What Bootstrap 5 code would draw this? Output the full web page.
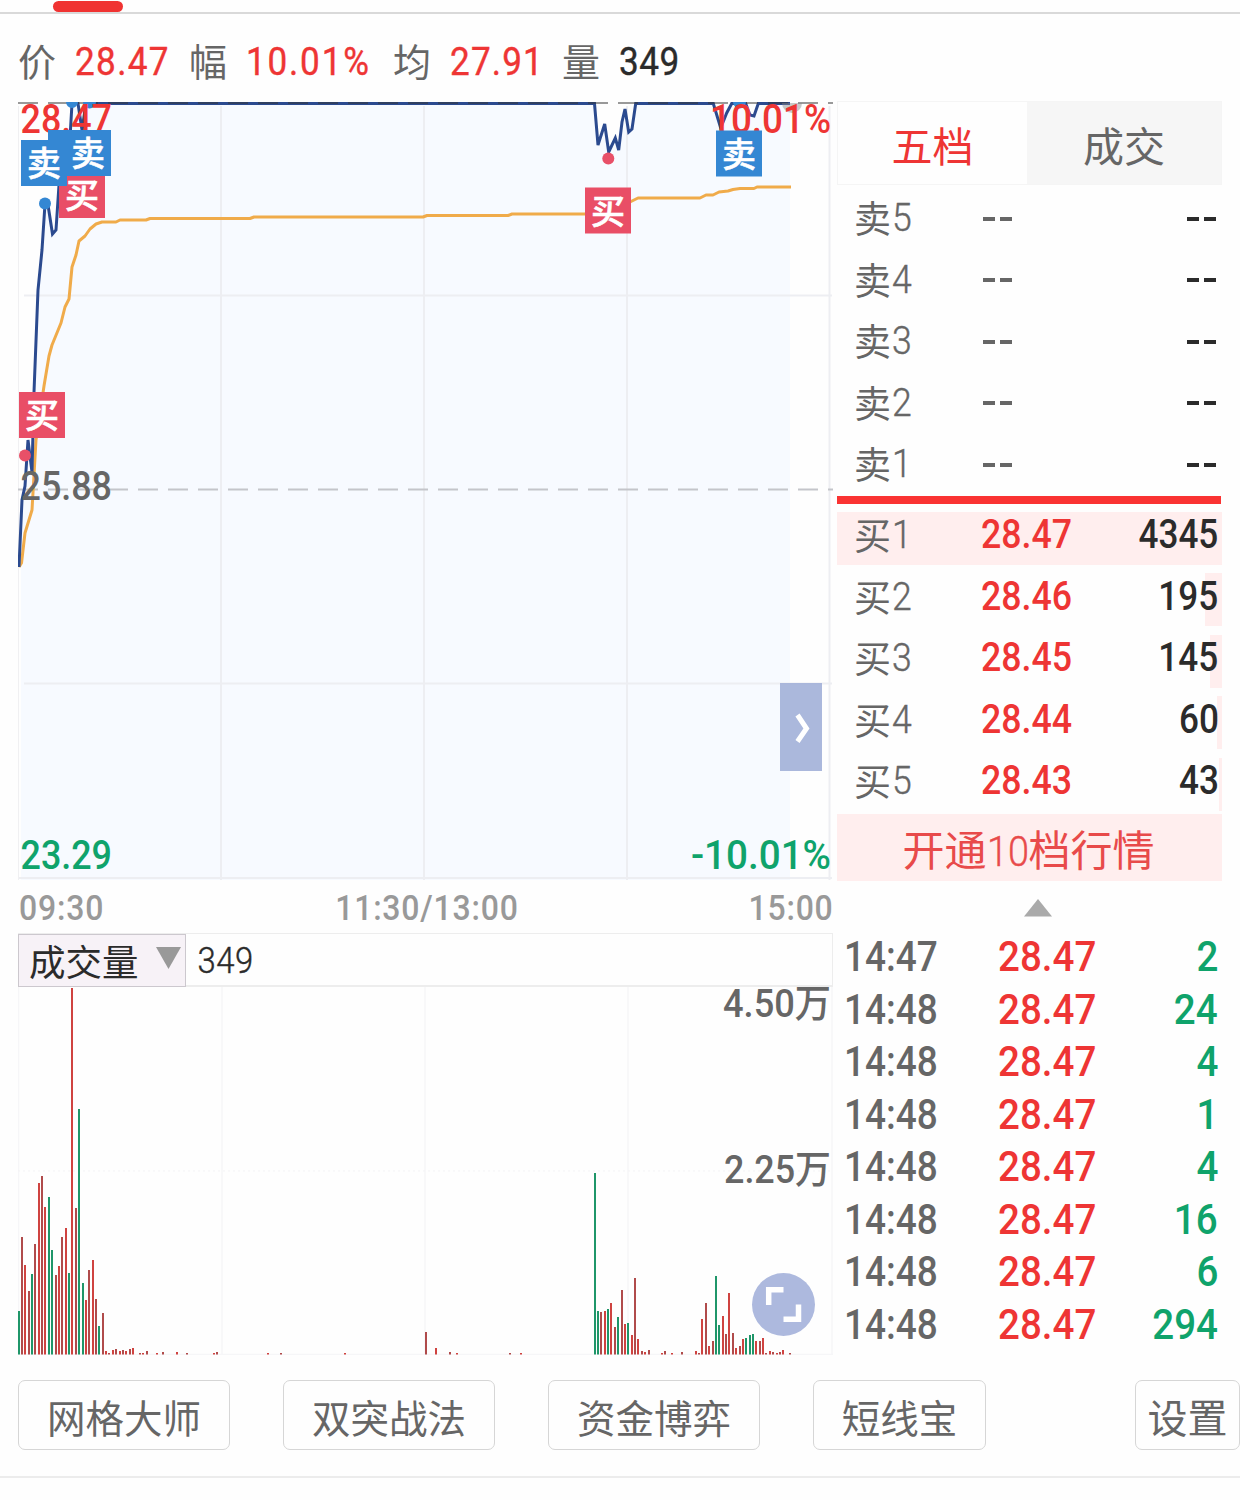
<!DOCTYPE html>
<html lang="zh-CN">
<head>
<meta charset="utf-8">
<meta name="viewport" content="width=device-width, initial-scale=1">
<title>分时行情</title>
<link rel="stylesheet" href="https://cdn.jsdelivr.net/npm/bootstrap@5.3.0/dist/css/bootstrap.min.css">
<style>
:root{--up:#ee3534;--down:#0fa36b;--ink:#666;--dark:#2b2b2b}
body{width:1240px;height:1500px;overflow:hidden;background:#fefefe;color:var(--ink);font-family:Roboto,"Noto Sans CJK SC",sans-serif;line-height:1}
.up{color:var(--up)}.down{color:var(--down)}.ink-dark{color:var(--dark)}
.topline{height:14px;border-bottom:2px solid #d9d9d9}
.topline i{left:53px;top:1px;width:70px;height:11px;background:#f03332}
.quote{height:87px;padding:10px 0 0 18px;font-size:38px}
.quote .cap{width:57px}
.quote .val{font-size:39px;padding-bottom:1px;-webkit-text-stroke:.4px}
.num{display:inline-block;transform:scaleX(.9);transform-origin:0 50%;white-space:nowrap}
.num-end{transform-origin:100% 50%}
.left-col{width:815px;margin-left:18px}
.right-col{width:385px;margin-left:4px}
.price-box{height:779px}
svg{display:block}
svg text{font-family:Roboto,"Noto Sans CJK SC",sans-serif;font-weight:500}
.axis{height:53px;font-size:35.5px;font-weight:500;color:#999;padding:5px 0 0 1px}
.axis .num{letter-spacing:.9px}
.axis .num-end{margin-right:-1px}
.vol-head{height:54px;border:1px solid #ededed;border-left:0;border-bottom-width:2px;font-size:36.5px;color:var(--dark)}
.vol-pick{width:168px;height:53px;background:#f7f2f7;border:1px solid #ccc8ce;padding:8px 0 0 10px}
.vol-pick svg{margin:-12px 0 0 16px}
.side-toggle{left:762px;top:582px;width:42px;height:88px;background:rgba(158,173,215,.87)}
.expand{left:734px;top:286px;width:63px;height:63px;background:#adb9de}
.tab-row{height:84px;font-size:41px;border:1px solid #f5f5f5}
.tab-row>div{padding-top:10px}
.tab-row .off{background:#f6f6f6;width:194px}
.book{height:61.5px;font-size:37px;padding-left:17px}
.book .lbl{width:127px;padding-top:2px}
.book .lbl b{font-weight:300;font-size:39.5px;padding-left:1px;-webkit-text-stroke:.4px;vertical-align:2px}
#asks .lbl{padding-top:0}
.book .px,.book .qty{font-size:40.8px;font-weight:500}
.book .px{transform:scaleX(.875)}
.book .qty{color:var(--dark);padding-right:4px;transform:scaleX(.86)}
.depth{right:0;top:7.5px;height:53px;background:#ffeeee;z-index:0}
.asks{padding-top:3px;height:311px}
.divider{height:8px;background:#fa3332;width:384px}
.dash{width:12px;height:4px;background:#666}
.dash.k{background:var(--dark)}
.more{height:67px;margin-top:2px;background:#ffeeee;color:#e84a4a;font-size:42px;padding:17px 0 0 1px}
.tick{height:52.5px;font-size:42.8px;font-weight:500;padding:0 4px 0 7px}
.tick .t{width:154px;font-size:42.5px;transform:scaleX(.87);padding-top:1px}
.tools{padding:25px 0 0 18px;height:123px;border-bottom:2px solid #ececec}
.tool{height:70px;width:212px;margin-right:53px;border:1.5px solid #d6d6d6;border-radius:7px;font-size:38.5px;color:var(--ink);padding:9px 0 0}
</style>
<script src="https://cdn.jsdelivr.net/npm/bootstrap@5.3.0/dist/js/bootstrap.bundle.min.js"></script>
</head>
<body>
<div class="topline position-relative"><i class="position-absolute rounded-pill"></i></div>
<div class="quote d-flex align-items-center">
  <span class="cap">价</span><span class="val up num" style="width:114px;letter-spacing:1.5px">28.47</span>
  <span class="cap">幅</span><span class="val up num" style="width:147px;letter-spacing:2px">10.01%</span>
  <span class="cap">均</span><span class="val up num" style="width:112px;letter-spacing:1.3px">27.91</span>
  <span class="cap">量</span><span class="val ink-dark num" style="letter-spacing:.6px">349</span>
</div>
<main class="d-flex align-items-start">
  <section class="left-col flex-shrink-0">
    <div class="price-box position-relative">
      <svg width="815" height="779" viewBox="18 101 815 779">
        <path fill="#f7faff" d="M21 880V500L25 486 28 440 32 472 34 392 38 290 45 204 50 213 53 235 56 230 60 170 70 138 72 103H78L82 130 86 103H594.500L598 145 604.700 124 608.700 152 615.300 138 618.700 150 622 122 625 109 628.700 132 632 129 635.700 103H713.300L720.700 128 726.700 113 731.700 103H745.700L750 115 754 116 758.300 103H790V880Z"/>
        <path stroke="#edeef2" stroke-width="2" fill="none" d="M221 106V880M424 106V880M627 106V880M829.500 106V880M24 295.500H832M24 683.500H832M18 878H832"/>
        <path stroke="#f0f0f2" d="M18.500 106V880"/>
        <path stroke="#c4c5ca" stroke-width="2" stroke-dasharray="20 10" d="M18 489.500H833"/>
        <path stroke="#f0ab4a" stroke-width="3" fill="none" stroke-linejoin="round" d="M19 567L21.500 563 25 533 32 510 36 440 44 386 49 356 52 345 61 323 65 307 69 299 72 267 76 255 79 241 85 236 90 229 96 224 102 222H116L120 220H146L150 218.500H250L254 217H423L427 215.500H508L512 214H585L620 207 638 198H700L706 195H713L719 192 728 191 733 189.500 740 188.500H754L757 187H791"/>
        <path stroke="#2b4a8f" stroke-width="3" fill="none" d="M19 567L22 500 25 486 28 440 32 472 34 392 38 290 42 250 45 204 48 205 52.500 234 56 230 60 170 70 138 72 103.500H78L82 130 86 103.500H594.500L598 145 604.700 124 608.700 152 615.300 138 618.700 150 622 122 625 109 628.700 132 632 129 635.700 103.500H713.300L720.700 128 726.700 113 731.700 103.500H745.700L750 115 754 116 758.300 103.500H790"/>
        <path stroke="#333" stroke-opacity=".5" stroke-width="2" stroke-dasharray="20 10" d="M18 103H833"/>
        <g fill="#3487d3"><circle cx="45" cy="203.500" r="6"/><path d="M66 102h12a6 6 0 0 1-12 0M83 102h13a6 6 0 0 1-13 0M733 102h13a6 6 0 0 1-13 0"/></g>
        <path fill="#888" fill-opacity=".45" d="M782 103h20a10 10 0 0 1-20 0"/>
        <g fill="#e85068"><circle cx="25" cy="455.500" r="6"/><circle cx="608.300" cy="158.500" r="6"/></g>
        <g font-size="40.500">
          <text x="20.500" y="133" fill="#ee3534" textLength="91.500" lengthAdjust="spacingAndGlyphs">28.47</text>
          <text x="710" y="133" fill="#ee3534" textLength="121" lengthAdjust="spacingAndGlyphs">10.01%</text>
          <text x="20.500" y="500" fill="#666" textLength="91.500" lengthAdjust="spacingAndGlyphs">25.88</text>
          <text x="20.500" y="868.500" fill="#0fa36b" textLength="91.500" lengthAdjust="spacingAndGlyphs">23.29</text>
          <text x="691" y="868.500" fill="#0fa36b" textLength="140" lengthAdjust="spacingAndGlyphs">-10.01%</text>
        </g>
        <g id="flags" font-size="34" text-anchor="middle"></g>
      </svg>
      <button class="side-toggle position-absolute border-0 p-0" aria-label="展开"><svg width="42" height="88" fill="none" stroke="#fff" stroke-width="5"><path d="M17.500 32L26.500 45.500 17.500 58.500"/></svg></button>
    </div>
    <div class="axis d-flex justify-content-between align-items-center">
      <span class="num">09:30</span><span class="num" style="transform-origin:50% 50%">11:30/13:00</span><span class="num num-end">15:00</span>
    </div>
    <div class="vol-head d-flex">
      <div class="vol-pick d-flex align-items-center">成交量<svg width="27" height="23"><path fill="#999" d="M1 0H26L13.500 22Z"/></svg></div>
      <span class="num align-self-center ms-2 ps-1 pt-1 fw-light" style="letter-spacing:.6px;-webkit-text-stroke:.4px">349</span>
    </div>
    <div class="position-relative">
      <svg width="815" height="368" viewBox="18 987 815 368">
        <path stroke="#f6f6f8" stroke-width="1.500" fill="none" d="M18.500 987V1355M222 987V1355M425 987V1355M628 987V1355M832 987V1355M18 1354.500H833"/>
        <path stroke="#f3f3f5" stroke-dasharray="2 3" d="M18 1171H833"/>
        <g id="bars"></g>
        <g font-size="39" fill="#666">
          <text x="723" y="1017" textLength="108" lengthAdjust="spacingAndGlyphs">4.50万</text>
          <text x="724" y="1183" textLength="107" lengthAdjust="spacingAndGlyphs">2.25万</text>
        </g>
      </svg>
      <button class="expand position-absolute rounded-circle border-0 p-0" aria-label="全屏"><svg width="63" height="63" fill="none" stroke="#fff" stroke-width="5.500"><path d="M16.700 32V16.700H31.500M46.500 31.500V46.300H31.500"/></svg></button>
    </div>
  </section>
  <section class="right-col flex-shrink-0">
    <div class="tab-row d-flex">
      <div class="flex-fill d-flex align-items-center justify-content-center up">五档</div>
      <div class="off d-flex align-items-center justify-content-center">成交</div>
    </div>
    <div class="asks" id="asks"></div>
    <div class="divider"></div>
    <div id="bids"></div>
    <div class="more d-flex align-items-start justify-content-center"><span style="margin-left:-3px">开通<span class="num fw-light" style="width:42px;-webkit-text-stroke:.4px">10</span>档行情</span></div>
    <svg width="385" height="50"><path fill="#aaa" d="M187 35.500L201 18 215 35.500Z"/></svg>
    <div id="ticks"></div>
  </section>
</main>
<footer class="tools d-flex align-items-start">
  <button class="tool btn">网格大师</button><button class="tool btn">双突战法</button><button class="tool btn">资金博弈</button><button class="tool btn" style="width:173px">短线宝</button>
  <button class="tool btn ms-auto me-0" style="width:105px;font-size:40px">设置</button>
</footer>
<script>
const el = id => document.getElementById(id);
el('flags').innerHTML = [[59,172,0],[48,130,1],[21,140,1],[65,130,1],[19,392,0],[585,187.5,0],[716,130.5,1]]
  .map(([x,y,s]) => `<rect x="${x}" y="${y}" width="46" height="46" fill="${s ? '#3487d3' : '#e94e66'}"/><text x="${x+23}" y="${y+36}" fill="#fff" stroke="#fff" stroke-width=".6">${s ? '卖' : '买'}</text>`).join('');

// Each bar: x, top, 1 when the minute closed lower
const base = 1354.5;
const bars = [[19,1311,1],[22,1237],[25,1265],[29,1291],[32,1274,1],[35,1244],[39,1183],[42,1176],[45,1207],[49,1197,1],[52,1250,1],[56,1275],[59,1266],[62,1237],[66,1228],[69,1273,1],[72,988],[76,1208],[79,1109,1],[83,1283,1],[86,1300],[89,1270],[93,1260],[96,1299],[99,1326,1],[103,1313],[106,1351],[109,1353],[113,1350],[116,1349],[120,1351],[123,1350],[126,1351],[130,1349],[133,1348],[140,1353],[143,1353],[147,1351],[157,1353],[163,1352],[177,1352],[187,1353],[214,1353],[217,1352],[268,1353],[281,1353],[345,1353],[426,1332],[436,1348],[450,1352],[457,1353],[510,1353],[521,1353],
[595,1173,1],[598,1311,1],[601,1312],[605,1311],[608,1309,1],[611,1303],[615,1327],[618,1317,1],[622,1290],[625,1324],[628,1323,1],[632,1335],[635,1278],[638,1339],[642,1351],[645,1352],[649,1350],[662,1353],[665,1351],[672,1353],[682,1352],[696,1351],[699,1353],[702,1319],[706,1303],[709,1346],[713,1341],[716,1276,1],[719,1325,1],[723,1316],[726,1334],[729,1293],[733,1333],[736,1348],[740,1346],[743,1339],[746,1338,1],[750,1335,1],[753,1334,1],[756,1341],[760,1341],[763,1338],[766,1353],[770,1351],[773,1352],[777,1353],[780,1352],[783,1350],[790,1353]];
el('bars').innerHTML = bars.map(([x,y,d],i) => `<rect x="${x-1}" y="${y}" width="2" height="${base-y}" fill="${d ? '#1f9669' : i%2 ? '#b04b4b' : '#cf4340'}"/>`).join('');

const dash = k => `<i class="dash ${k}"></i><i class="dash ${k}" style="margin-left:5px"></i>`;
el('asks').innerHTML = [5,4,3,2,1].map(n => `<div class="book d-flex align-items-center"><span class="lbl">卖<b class="num">${n}</b></span><span class="d-flex" style="padding-left:2px">${dash('')}</span><span class="d-flex ms-auto" style="padding-right:6px">${dash('k')}</span></div>`).join('');
el('bids').innerHTML = [['28.47',4345,385],['28.46',195,17],['28.45',145,12],['28.44',60,5],['28.43',43,3]]
  .map(([p,q,w],i) => `<div class="book d-flex align-items-center position-relative"><i class="depth position-absolute" style="width:${w}px"></i><span class="lbl position-relative">买<b class="num">${i+1}</b></span><span class="px up num position-relative">${p}</span><span class="qty num num-end ms-auto position-relative">${q}</span></div>`).join('');
el('ticks').innerHTML = [2,24,4,1,4,16,6,294]
  .map((q,i) => `<div class="tick d-flex align-items-center"><span class="t num">14:4${i ? 8 : 7}</span><span class="up num">28.47</span><span class="down num num-end ms-auto">${q}</span></div>`).join('');
</script>
</body>
</html>
